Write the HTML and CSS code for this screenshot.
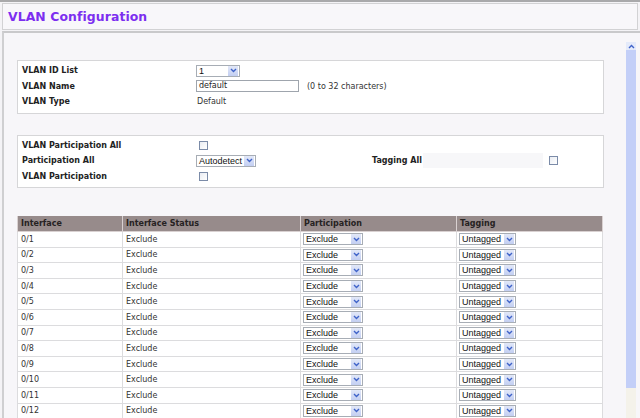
FILE: index.html
```html
<!DOCTYPE html>
<html>
<head>
<meta charset="utf-8">
<link rel="stylesheet" href="styles.css">
</head>
<body>
<div class="topline"></div>
<div class="header"><h1 class="title">VLAN Configuration</h1></div>
<div class="main">
  <div class="content">
    <div class="box box1">
      <div class="row"><div class="lbl">VLAN ID List</div><div class="val"><div class="sel s-id"><span class="st">1</span><span class="arr"><svg width="7" height="5" viewBox="0 0 7 5"><path d="M1 1 L3.5 3.5 L6 1" fill="none" stroke="#3f63c9" stroke-width="1.4"/></svg></span></div></div></div>
      <div class="row"><div class="lbl">VLAN Name</div><div class="val"><div class="inp">default</div><span class="hint">(0 to 32 characters)</span></div></div>
      <div class="row"><div class="lbl">VLAN Type</div><div class="val">Default</div></div>
    </div>

    <div class="box box2">
      <div class="row"><div class="lbl">VLAN Participation All</div><div class="val"><span class="cb"></span></div></div>
      <div class="row"><div class="lbl">Participation All</div><div class="val wide"><div class="sel s-auto"><span class="st">Autodetect</span><span class="arr"><svg width="7" height="5" viewBox="0 0 7 5"><path d="M1 1 L3.5 3.5 L6 1" fill="none" stroke="#3f63c9" stroke-width="1.4"/></svg></span></div></div><div class="lbl2">Tagging All</div><div class="strip"></div><div class="val2"><span class="cb"></span></div></div>
      <div class="row"><div class="lbl">VLAN Participation</div><div class="val"><span class="cb"></span></div></div>
    </div>

    <table class="grid">
      <thead>
        <tr><th class="c1">Interface</th><th class="c2">Interface Status</th><th class="c3">Participation</th><th class="c4">Tagging</th></tr>
      </thead>
      <tbody id="rows"></tbody>
    </table>
  </div>
  <div class="scroll">
    <div class="sbtn"><svg width="7" height="5" viewBox="0 0 7 5"><path d="M1 4 L3.5 1.5 L6 4" fill="none" stroke="#3f63c9" stroke-width="1.4"/></svg></div>
    <div class="thumb"></div>
    <div class="track"></div>
  </div>
</div>
<script src="app.js"></script>
</body>
</html>
```

FILE: app.js
```js
(function () {
  var tb = document.getElementById('rows');
  var arrow = '<span class="arr"><svg width="7" height="5" viewBox="0 0 7 5"><path d="M1 1 L3.5 3.5 L6 1" fill="none" stroke="#3f63c9" stroke-width="1.4"/></svg></span>';
  var html = '';
  for (var i = 1; i <= 12; i++) {
    html += '<tr><td>0/' + i + '</td><td>Exclude</td>' +
      '<td><div class="sel s-ex"><span class="st">Exclude</span>' + arrow + '</div></td>' +
      '<td><div class="sel s-tag"><span class="st">Untagged</span>' + arrow + '</div></td></tr>';
  }
  tb.innerHTML = html;
})();
```

FILE: styles.css
```css
html, body {
  margin: 0;
  padding: 0;
  height: 418px;
  overflow: hidden;
}
body {
  background: #f4f3f6;
  font-family: "DejaVu Sans", Verdana, sans-serif;
  font-size: 8px;
  color: #2b2b2b;
}
.topline {
  height: 2px;
  background: #a9a9ab;
}
.header {
  margin: 1px 2px 0 2px;
  height: 25px;
  border: 1px solid #d2d2d4;
  background: #f8f7fa;
  display: flex;
  align-items: center;
}
.title {
  margin: 0 0 0 5px;
  font-size: 12.4px;
  font-weight: bold;
  color: #7c2ef0;
  letter-spacing: 0.1px;
}
.main {
  margin: 1px 0 0 2px;
  border-top: 2px solid #c9c9cb;
  border-left: 2px solid #cfcfd1;
  background: #f7f6f9;
  display: flex;
  height: 400px;
}
.content {
  flex: 1;
  padding: 27px 0 0 13px;
}
.box {
  width: 587px;
  box-sizing: border-box;
  border: 1px solid #d6d6d8;
  background: #ffffff;
  padding: 2px 0 3px 4px;
}
.box2 {
  margin-top: 21px;
  padding-top: 2px;
  padding-bottom: 3px;
}
.row {
  display: flex;
  align-items: center;
  height: 15.5px;
}
.lbl {
  width: 175px;
  font-weight: bold;
  color: #222;
}
.val {
  display: flex;
  align-items: center;
  color: #333;
}
.val.wide {
  width: 175px;
}
.lbl2 {
  width: 51px;
  font-weight: bold;
  color: #222;
}
.strip {
  width: 120px;
  height: 15px;
  background: #f7f7f9;
}
.val2 {
  margin-left: 4px;
  display: flex;
  align-items: center;
}
.sel {
  box-sizing: border-box;
  height: 12px;
  border: 1px solid #a7adb5;
  background: #fff;
  display: flex;
  align-items: center;
  justify-content: space-between;
  font-family: "Liberation Sans", Arial, sans-serif;
  font-size: 9px;
  color: #111;
}
.st {
  padding-left: 2px;
  line-height: 10px;
}
.arr {
  width: 10px;
  height: 10px;
  margin-right: 1px;
  background: linear-gradient(#e2e8f8, #c3cff2);
  display: flex;
  align-items: center;
  justify-content: center;
}
.s-id { width: 44px; margin-left: -1px; }
.s-auto { width: 60px; margin-left: -1px; }
.s-ex { width: 60px; }
.s-tag { width: 57px; }
.inp {
  box-sizing: border-box;
  width: 103px;
  height: 12px;
  margin-left: -1px;
  border: 1px solid #9fa5ad;
  background: #fff;
  padding-left: 2px;
  line-height: 10px;
  color: #222;
}
.hint {
  margin-left: 8px;
  color: #333;
}
.cb {
  display: inline-block;
  box-sizing: border-box;
  width: 9px;
  height: 9px;
  margin-left: 2px;
  border: 1px solid #7b8ba8;
  background: linear-gradient(135deg, #e9ecf2, #ffffff);
}
.grid {
  margin-top: 28px;
  width: 586px;
  border-collapse: collapse;
  background: #fff;
}
.grid th {
  background: #978b8b;
  color: #262222;
  font-weight: bold;
  text-align: left;
  height: 15px;
  padding: 0 0 0 3px;
  border: 1px solid #d9d1d1;
  border-top: none;
}
.grid td {
  height: 14.6px;
  padding: 0 0 0 3px;
  border: 1px solid #dcdcde;
  color: #333;
}
.grid .c1 { width: 101px; }
.grid .c2 { width: 174px; }
.grid .c3 { width: 152px; }
.grid td .sel { margin-left: -1px; }
.scroll {
  width: 10px;
  margin-right: 4px;
  display: flex;
  flex-direction: column;
  padding-top: 9px;
}
.sbtn {
  height: 8px;
  background: #e4eafa;
  display: flex;
  align-items: center;
  justify-content: center;
}
.thumb {
  height: 338px;
  background: #c3cff8;
}
.track {
  flex: 1;
  background: #f4f2ea;
}
```
